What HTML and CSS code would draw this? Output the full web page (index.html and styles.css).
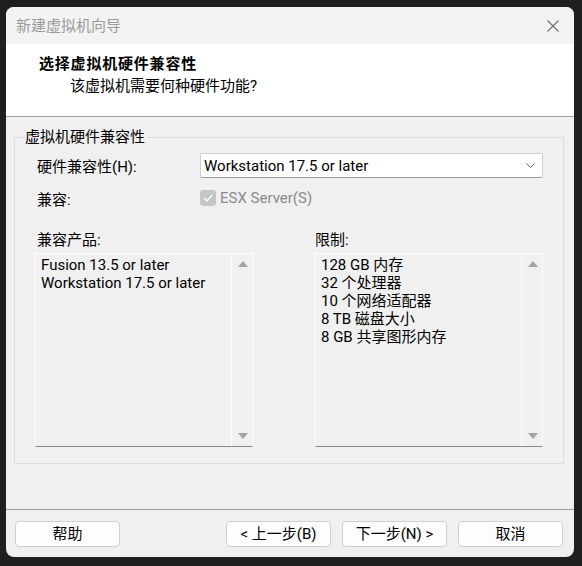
FILE: index.html
```html
<!DOCTYPE html>
<html lang="zh-CN">
<head>
<meta charset="utf-8">
<title>新建虚拟机向导</title>
<link rel="stylesheet" href="styles.css">
</head>
<body>
<div class="window">
  <div class="titlebar">
    <span class="title">新建虚拟机向导</span>
    <svg class="close" width="12" height="12" viewBox="0 0 12 12"><path d="M0.5 0.5 L11.5 11.5 M11.5 0.5 L0.5 11.5" stroke="#6e6e6e" stroke-width="1.1" fill="none"/></svg>
  </div>
  <div class="header">
    <div class="h-title">选择虚拟机硬件兼容性</div>
    <div class="h-sub">该虚拟机需要何种硬件功能?</div>
  </div>
  <div class="body">
    <fieldset class="group">
      <legend>虚拟机硬件兼容性</legend>
      <div class="group-inner">
        <div class="row row-select">
          <span class="label">硬件兼容性(H):</span>
          <div class="select">
            <span>Workstation 17.5 or later</span>
            <svg class="chev" width="9" height="5" viewBox="0 0 9 5"><path d="M0.5 0.5 L4.5 4.5 L8.5 0.5" stroke="#606060" stroke-width="1" fill="none"/></svg>
          </div>
        </div>
        <div class="row row-check">
          <span class="label">兼容:</span>
          <span class="check"><svg width="10" height="8" viewBox="0 0 10 8"><path d="M1 4 L4 7 L9 1" stroke="#fff" stroke-width="1.4" fill="none"/></svg></span>
          <span class="check-text">ESX Server(S)</span>
        </div>
        <div class="lists">
          <div class="col col-left">
            <div class="list-label">兼容产品:</div>
            <div class="listbox">
              <div class="items">
                <div>Fusion 13.5 or later</div>
                <div>Workstation 17.5 or later</div>
              </div>
              <div class="scroll">
                <span class="arrow up"></span>
                <span class="arrow down"></span>
              </div>
            </div>
          </div>
          <div class="col col-right">
            <div class="list-label">限制:</div>
            <div class="listbox">
              <div class="items">
                <div>128 GB 内存</div>
                <div>32 个处理器</div>
                <div>10 个网络适配器</div>
                <div>8 TB 磁盘大小</div>
                <div>8 GB 共享图形内存</div>
              </div>
              <div class="scroll">
                <span class="arrow up"></span>
                <span class="arrow down"></span>
              </div>
            </div>
          </div>
        </div>
      </div>
    </fieldset>
  </div>
  <div class="footer">
    <button class="btn">帮助</button>
    <div class="spacer"></div>
    <button class="btn">&lt; 上一步(B)</button>
    <button class="btn">下一步(N) &gt;</button>
    <button class="btn btn-cancel">取消</button>
  </div>
</div>
</body>
</html>
```

FILE: styles.css
```css
* { box-sizing: border-box; }
html, body { margin: 0; padding: 0; }
body {
  background: #1f1f1f;
  width: 582px;
  height: 566px;
  overflow: hidden;
  font-family: Roboto, "Noto Sans CJK SC", sans-serif;
  font-size: 15px;
  color: #000;
}
.window {
  margin: 7px 0 0 6px;
  width: 568px;
  height: 550px;
  background: #f0f0f0;
  border-radius: 8px;
  overflow: hidden;
  display: flex;
  flex-direction: column;
}
.titlebar {
  height: 37px;
  flex: none;
  background: #f3f3f3;
  display: flex;
  align-items: center;
  padding: 0 15px 0 10px;
}
.title {
  color: #9a9a9a;
  flex: 1;
  line-height: 20px;
}
.close { display: block; }
.header {
  height: 73px;
  flex: none;
  background: #fff;
  border-bottom: 1px solid #a0a0a0;
  padding: 10px 0 0 33px;
}
.h-title {
  font-weight: bold;
  line-height: 20px;
  letter-spacing: 0.8px;
}
.h-sub {
  line-height: 20px;
  margin-top: 2px;
  padding-left: 31px;
}
.body {
  height: 392px;
  flex: none;
  padding: 10px 10px 0 8px;
}
.group {
  margin: 0;
  padding: 0 0 16px 8px;
  border: 1px solid #dcdcdc;
  height: 337px;
}
.group legend {
  padding: 0 2px;
  margin: 0;
  line-height: 20px;
}
.group-inner { padding-left: 12px; }
.row { display: flex; align-items: center; }
.label { padding-left: 2px; }
.row-select { margin-top: 6px; height: 25px; }
.row-select .label { width: 165px; }
.select {
  width: 343px;
  height: 25px;
  background: #fff;
  border: 1px solid #cfcfcf;
  border-bottom-color: #9a9a9a;
  border-radius: 2px;
  display: flex;
  align-items: center;
  padding: 0 7px 0 3px;
}
.select span { flex: 1; }
.chev { display: block; }
.row-check { margin-top: 10px; height: 20px; }
.row-check .label { width: 165px; }
.check {
  width: 16px;
  height: 16px;
  border-radius: 3px;
  background: #c6c6c6;
  display: flex;
  align-items: center;
  justify-content: center;
  margin-right: 4px;
}
.check svg { display: block; }
.check-text { color: #8a8a8a; }
.lists {
  display: flex;
  gap: 62px;
  margin-top: 22px;
}
.col-left { width: 218px; }
.col-right { width: 228px; }
.list-label { line-height: 20px; padding-left: 2px; margin-bottom: 3px; }
.col-right .list-label { padding-left: 0; }
.listbox {
  height: 194px;
  display: flex;
  border: 1px solid #fdfdfd;
  border-bottom-color: #8a8a8a;
  background: #f0f0f0;
}
.items {
  flex: 1;
  padding: 2px 0 0 5px;
  line-height: 18px;
}
.scroll {
  width: 21px;
  flex: none;
  border-left: 1px solid #fdfdfd;
  display: flex;
  flex-direction: column;
  justify-content: space-between;
  align-items: center;
  padding: 7px 0 7px 1px;
}
.arrow {
  width: 0;
  height: 0;
  border-left: 5px solid transparent;
  border-right: 5px solid transparent;
}
.arrow.up { border-bottom: 6px solid #a3a3a3; }
.arrow.down { border-top: 6px solid #a3a3a3; }
.footer {
  flex: 1;
  border-top: 1px solid #a0a0a0;
  display: flex;
  align-items: flex-start;
  padding: 11px 11px 0 9px;
  gap: 11px;
}
.spacer { flex: 1; }
.btn {
  width: 105px;
  height: 26px;
  background: #fdfdfd;
  border: 1px solid #d0d0d0;
  border-radius: 4px;
  font: inherit;
  color: #000;
  padding: 0;
  line-height: 24px;
}
```
